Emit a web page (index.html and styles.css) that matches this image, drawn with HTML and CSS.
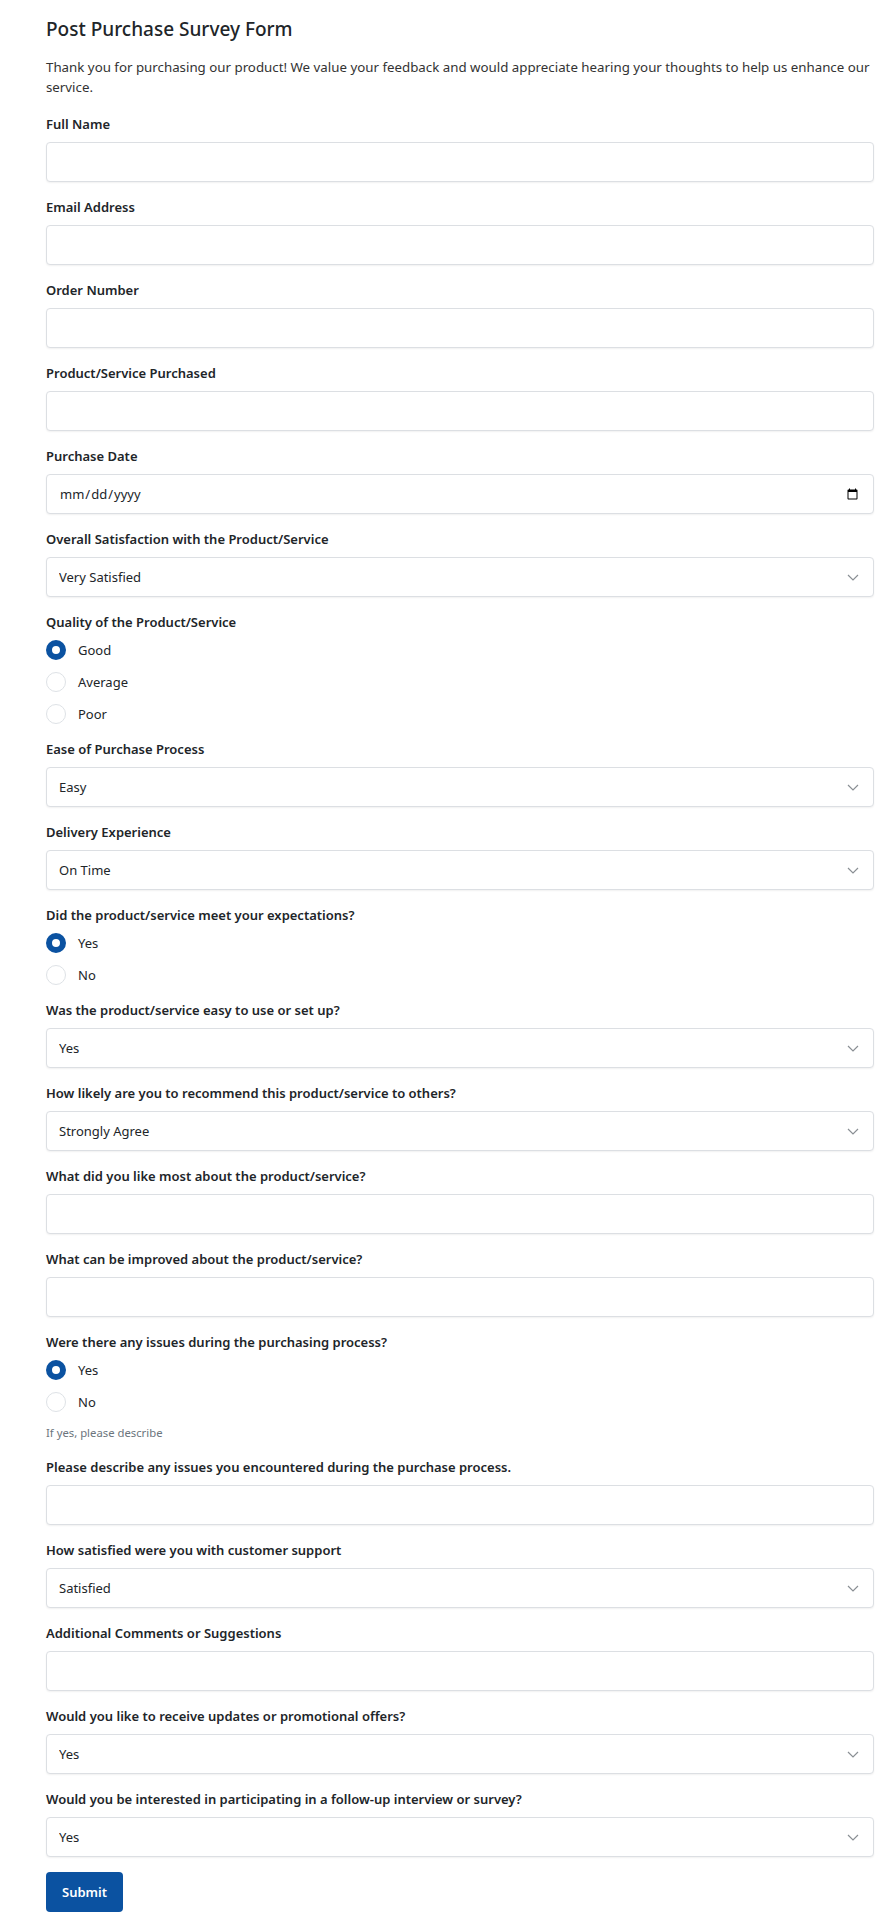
FILE: index.html
```html
<!DOCTYPE html>
<html lang="en">
<head>
    <meta charset="UTF-8">
    <meta name="viewport" content="width=device-width, initial-scale=1.0">
    <title>Post Purchase Survey Form</title>
    <link rel="stylesheet" href="styles.css">
</head>
<body>
    <div class="survey">
        <h1 class="survey-title">Post Purchase Survey Form</h1>
        <p class="survey-intro">Thank you for purchasing our product! We value your feedback and would appreciate hearing your thoughts to help us enhance our service.</p>

        <form class="survey-form" onsubmit="return false;">
            <div class="field">
                <label class="field-label" for="fullName">Full Name</label>
                <input class="field-input" type="text" id="fullName" name="fullName">
            </div>
            <div class="field">
                <label class="field-label" for="email">Email Address</label>
                <input class="field-input" type="email" id="email" name="email">
            </div>
            <div class="field">
                <label class="field-label" for="orderNumber">Order Number</label>
                <input class="field-input" type="text" id="orderNumber" name="orderNumber">
            </div>
            <div class="field">
                <label class="field-label" for="product">Product/Service Purchased</label>
                <input class="field-input" type="text" id="product" name="product">
            </div>
            <div class="field">
                <label class="field-label" for="purchaseDate">Purchase Date</label>
                <input class="field-input" type="date" id="purchaseDate" name="purchaseDate">
            </div>
            <div class="field">
                <label class="field-label" for="overall">Overall Satisfaction with the Product/Service</label>
                <div class="select-wrap">
                    <select class="field-input field-select" id="overall" name="overall">
                        <option>Very Satisfied</option>
                        <option>Satisfied</option>
                        <option>Neutral</option>
                        <option>Dissatisfied</option>
                        <option>Very Dissatisfied</option>
                    </select>
                    <svg class="chevron" width="12" height="7" viewBox="0 0 12 7"><path d="M1 1l5 5 5-5" fill="none" stroke="#8a8f94" stroke-width="1.2"/></svg>
                </div>
            </div>
            <div class="field">
                <span class="field-label">Quality of the Product/Service</span>
                <div class="options">
                    <label class="option"><input type="radio" name="quality" value="good" checked> Good</label>
                    <label class="option"><input type="radio" name="quality" value="average"> Average</label>
                    <label class="option"><input type="radio" name="quality" value="poor"> Poor</label>
                </div>
            </div>
            <div class="field">
                <label class="field-label" for="ease">Ease of Purchase Process</label>
                <div class="select-wrap">
                    <select class="field-input field-select" id="ease" name="ease">
                        <option>Easy</option>
                        <option>Neutral</option>
                        <option>Difficult</option>
                    </select>
                    <svg class="chevron" width="12" height="7" viewBox="0 0 12 7"><path d="M1 1l5 5 5-5" fill="none" stroke="#8a8f94" stroke-width="1.2"/></svg>
                </div>
            </div>
            <div class="field">
                <label class="field-label" for="delivery">Delivery Experience</label>
                <div class="select-wrap">
                    <select class="field-input field-select" id="delivery" name="delivery">
                        <option>On Time</option>
                        <option>Delayed</option>
                        <option>Not Delivered</option>
                    </select>
                    <svg class="chevron" width="12" height="7" viewBox="0 0 12 7"><path d="M1 1l5 5 5-5" fill="none" stroke="#8a8f94" stroke-width="1.2"/></svg>
                </div>
            </div>
            <div class="field">
                <span class="field-label">Did the product/service meet your expectations?</span>
                <div class="options">
                    <label class="option"><input type="radio" name="expectations" value="yes" checked> Yes</label>
                    <label class="option"><input type="radio" name="expectations" value="no"> No</label>
                </div>
            </div>
            <div class="field">
                <label class="field-label" for="easyToUse">Was the product/service easy to use or set up?</label>
                <div class="select-wrap">
                    <select class="field-input field-select" id="easyToUse" name="easyToUse">
                        <option>Yes</option>
                        <option>No</option>
                    </select>
                    <svg class="chevron" width="12" height="7" viewBox="0 0 12 7"><path d="M1 1l5 5 5-5" fill="none" stroke="#8a8f94" stroke-width="1.2"/></svg>
                </div>
            </div>
            <div class="field">
                <label class="field-label" for="recommend">How likely are you to recommend this product/service to others?</label>
                <div class="select-wrap">
                    <select class="field-input field-select" id="recommend" name="recommend">
                        <option>Strongly Agree</option>
                        <option>Agree</option>
                        <option>Neutral</option>
                        <option>Disagree</option>
                        <option>Strongly Disagree</option>
                    </select>
                    <svg class="chevron" width="12" height="7" viewBox="0 0 12 7"><path d="M1 1l5 5 5-5" fill="none" stroke="#8a8f94" stroke-width="1.2"/></svg>
                </div>
            </div>
            <div class="field">
                <label class="field-label" for="likedMost">What did you like most about the product/service?</label>
                <input class="field-input" type="text" id="likedMost" name="likedMost">
            </div>
            <div class="field">
                <label class="field-label" for="improve">What can be improved about the product/service?</label>
                <input class="field-input" type="text" id="improve" name="improve">
            </div>
            <div class="field">
                <span class="field-label">Were there any issues during the purchasing process?</span>
                <div class="options">
                    <label class="option"><input type="radio" name="issues" value="yes" checked> Yes</label>
                    <label class="option"><input type="radio" name="issues" value="no"> No</label>
                </div>
                <div class="hint">If yes, please describe</div>
            </div>
            <div class="field">
                <label class="field-label" for="issueDetails">Please describe any issues you encountered during the purchase process.</label>
                <input class="field-input" type="text" id="issueDetails" name="issueDetails">
            </div>
            <div class="field">
                <label class="field-label" for="support">How satisfied were you with customer support</label>
                <div class="select-wrap">
                    <select class="field-input field-select" id="support" name="support">
                        <option>Satisfied</option>
                        <option>Neutral</option>
                        <option>Dissatisfied</option>
                    </select>
                    <svg class="chevron" width="12" height="7" viewBox="0 0 12 7"><path d="M1 1l5 5 5-5" fill="none" stroke="#8a8f94" stroke-width="1.2"/></svg>
                </div>
            </div>
            <div class="field">
                <label class="field-label" for="comments">Additional Comments or Suggestions</label>
                <input class="field-input" type="text" id="comments" name="comments">
            </div>
            <div class="field">
                <label class="field-label" for="updates">Would you like to receive updates or promotional offers?</label>
                <div class="select-wrap">
                    <select class="field-input field-select" id="updates" name="updates">
                        <option>Yes</option>
                        <option>No</option>
                    </select>
                    <svg class="chevron" width="12" height="7" viewBox="0 0 12 7"><path d="M1 1l5 5 5-5" fill="none" stroke="#8a8f94" stroke-width="1.2"/></svg>
                </div>
            </div>
            <div class="field">
                <label class="field-label" for="followUp">Would you be interested in participating in a follow-up interview or survey?</label>
                <div class="select-wrap">
                    <select class="field-input field-select" id="followUp" name="followUp">
                        <option>Yes</option>
                        <option>No</option>
                    </select>
                    <svg class="chevron" width="12" height="7" viewBox="0 0 12 7"><path d="M1 1l5 5 5-5" fill="none" stroke="#8a8f94" stroke-width="1.2"/></svg>
                </div>
            </div>
            <button class="submit-btn" type="submit">Submit</button>
        </form>
    </div>
</body>
</html>
```

FILE: styles.css
```css
body {
    margin: 0;
    background-color: #fff;
    font-family: "Noto Sans", "Open Sans", sans-serif;
    font-size: 13px;
    color: #212529;
}
.survey {
    padding: 15px 11px 19px 46px;
}
.survey-title {
    margin: 0 0 14px;
    font-size: 19px;
    line-height: 28px;
    font-weight: 500;
    color: #212529;
}
.survey-intro {
    margin: 0 0 17px;
    font-size: 13.3px;
    line-height: 20px;
    color: #333;
}
.field {
    margin-bottom: 15px;
}
.field-label {
    display: block;
    margin-bottom: 8px;
    line-height: 20px;
    font-weight: 600;
    color: #212529;
}
.field-input {
    display: block;
    width: 100%;
    height: 40px;
    box-sizing: border-box;
    padding: 0 12px;
    border: 1px solid #dcdfe3;
    border-radius: 4px;
    background-color: #fff;
    box-shadow: 0 1px 2px rgba(0, 0, 0, 0.06);
    font-family: inherit;
    font-size: 13px;
    color: #212529;
}
.select-wrap {
    position: relative;
}
.field-select {
    appearance: none;
    -webkit-appearance: none;
    padding-right: 36px;
}
.chevron {
    position: absolute;
    right: 15px;
    top: 17px;
    pointer-events: none;
}
.options {
    display: flex;
    flex-direction: column;
    gap: 12px;
}
.option {
    display: flex;
    align-items: center;
    gap: 12px;
    height: 20px;
    line-height: 20px;
    color: #212529;
}
.option input {
    appearance: none;
    -webkit-appearance: none;
    margin: 0;
    width: 20px;
    height: 20px;
    border: 1px solid #dee2e6;
    border-radius: 50%;
    background-color: #fff;
    box-sizing: border-box;
}
.option input:checked {
    border: 6px solid #0b52a1;
    background-color: #fff;
}
.hint {
    margin-top: 12px;
    font-size: 11.3px;
    line-height: 18px;
    color: #6c757d;
}
.submit-btn {
    display: block;
    height: 40px;
    padding: 0 16px;
    border: none;
    border-radius: 4px;
    background-color: #0b52a1;
    color: #fff;
    font-family: inherit;
    font-size: 13px;
    font-weight: 600;
    cursor: pointer;
}
.submit-btn:hover {
    background-color: #09468a;
}
```
